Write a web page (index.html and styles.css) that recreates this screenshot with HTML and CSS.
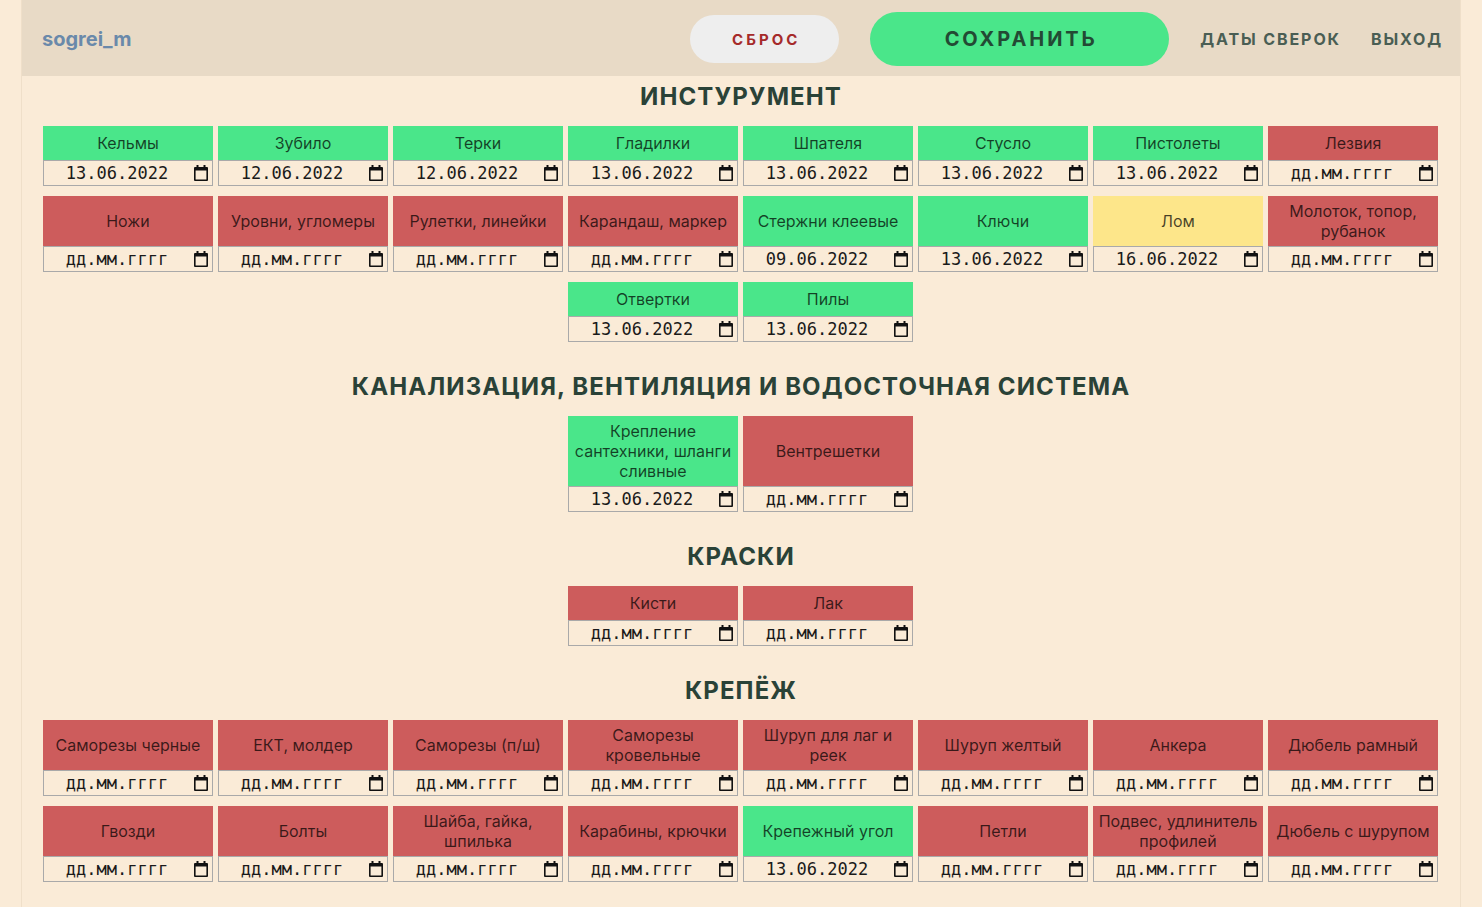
FILE: index.html
```html
<!DOCTYPE html>
<html lang="ru">
<head>
<meta charset="utf-8">
<title>sogrei_m</title>
<link rel="stylesheet" href="styles.css">
</head>
<body>
<svg width="0" height="0" class="defs">
  <defs>
    <symbol id="cal" viewBox="0 0 14 16">
      <path fill-rule="evenodd" d="M2.5 0h2v2h5V0h2v2H13a1 1 0 0 1 1 1v12a1 1 0 0 1-1 1H1a1 1 0 0 1-1-1V3a1 1 0 0 1 1-1h1.5z M1.6 5.5v8.9h10.8V5.5z"/>
    </symbol>
  </defs>
</svg>
<div class="page">
  <header class="topbar">
    <div class="logo">sogrei_m</div>
    <nav class="actions">
      <button class="btn btn-reset">СБРОС</button>
      <button class="btn btn-save">СОХРАНИТЬ</button>
      <a class="link">ДАТЫ СВЕРОК</a>
      <a class="link link-last">ВЫХОД</a>
    </nav>
  </header>

  <section class="group">
    <h2>ИНСТУРУМЕНТ</h2>
    <div class="cards">
      <div class="card ok"><div class="name">Кельмы</div><div class="date"><span>13.06.2022</span><svg><use href="#cal"/></svg></div></div>
      <div class="card ok"><div class="name">Зубило</div><div class="date"><span>12.06.2022</span><svg><use href="#cal"/></svg></div></div>
      <div class="card ok"><div class="name">Терки</div><div class="date"><span>12.06.2022</span><svg><use href="#cal"/></svg></div></div>
      <div class="card ok"><div class="name">Гладилки</div><div class="date"><span>13.06.2022</span><svg><use href="#cal"/></svg></div></div>
      <div class="card ok"><div class="name">Шпателя</div><div class="date"><span>13.06.2022</span><svg><use href="#cal"/></svg></div></div>
      <div class="card ok"><div class="name">Стусло</div><div class="date"><span>13.06.2022</span><svg><use href="#cal"/></svg></div></div>
      <div class="card ok"><div class="name">Пистолеты</div><div class="date"><span>13.06.2022</span><svg><use href="#cal"/></svg></div></div>
      <div class="card bad"><div class="name">Лезвия</div><div class="date"><span>дд.мм.гггг</span><svg><use href="#cal"/></svg></div></div>

      <div class="card bad"><div class="name">Ножи</div><div class="date"><span>дд.мм.гггг</span><svg><use href="#cal"/></svg></div></div>
      <div class="card bad"><div class="name">Уровни, угломеры</div><div class="date"><span>дд.мм.гггг</span><svg><use href="#cal"/></svg></div></div>
      <div class="card bad"><div class="name">Рулетки, линейки</div><div class="date"><span>дд.мм.гггг</span><svg><use href="#cal"/></svg></div></div>
      <div class="card bad"><div class="name">Карандаш, маркер</div><div class="date"><span>дд.мм.гггг</span><svg><use href="#cal"/></svg></div></div>
      <div class="card ok"><div class="name">Стержни клеевые</div><div class="date"><span>09.06.2022</span><svg><use href="#cal"/></svg></div></div>
      <div class="card ok"><div class="name">Ключи</div><div class="date"><span>13.06.2022</span><svg><use href="#cal"/></svg></div></div>
      <div class="card warn"><div class="name">Лом</div><div class="date"><span>16.06.2022</span><svg><use href="#cal"/></svg></div></div>
      <div class="card bad"><div class="name">Молоток, топор, рубанок</div><div class="date"><span>дд.мм.гггг</span><svg><use href="#cal"/></svg></div></div>

      <div class="card ok"><div class="name">Отвертки</div><div class="date"><span>13.06.2022</span><svg><use href="#cal"/></svg></div></div>
      <div class="card ok"><div class="name">Пилы</div><div class="date"><span>13.06.2022</span><svg><use href="#cal"/></svg></div></div>
    </div>
  </section>

  <section class="group">
    <h2>КАНАЛИЗАЦИЯ, ВЕНТИЛЯЦИЯ И ВОДОСТОЧНАЯ СИСТЕМА</h2>
    <div class="cards">
      <div class="card ok"><div class="name">Крепление сантехники, шланги сливные</div><div class="date"><span>13.06.2022</span><svg><use href="#cal"/></svg></div></div>
      <div class="card bad"><div class="name">Вентрешетки</div><div class="date"><span>дд.мм.гггг</span><svg><use href="#cal"/></svg></div></div>
    </div>
  </section>

  <section class="group">
    <h2>КРАСКИ</h2>
    <div class="cards">
      <div class="card bad"><div class="name">Кисти</div><div class="date"><span>дд.мм.гггг</span><svg><use href="#cal"/></svg></div></div>
      <div class="card bad"><div class="name">Лак</div><div class="date"><span>дд.мм.гггг</span><svg><use href="#cal"/></svg></div></div>
    </div>
  </section>

  <section class="group">
    <h2>КРЕПЁЖ</h2>
    <div class="cards">
      <div class="card bad"><div class="name">Саморезы черные</div><div class="date"><span>дд.мм.гггг</span><svg><use href="#cal"/></svg></div></div>
      <div class="card bad"><div class="name">ЕКТ, молдер</div><div class="date"><span>дд.мм.гггг</span><svg><use href="#cal"/></svg></div></div>
      <div class="card bad"><div class="name">Саморезы (п/ш)</div><div class="date"><span>дд.мм.гггг</span><svg><use href="#cal"/></svg></div></div>
      <div class="card bad"><div class="name">Саморезы кровельные</div><div class="date"><span>дд.мм.гггг</span><svg><use href="#cal"/></svg></div></div>
      <div class="card bad"><div class="name">Шуруп для лаг и реек</div><div class="date"><span>дд.мм.гггг</span><svg><use href="#cal"/></svg></div></div>
      <div class="card bad"><div class="name">Шуруп желтый</div><div class="date"><span>дд.мм.гггг</span><svg><use href="#cal"/></svg></div></div>
      <div class="card bad"><div class="name">Анкера</div><div class="date"><span>дд.мм.гггг</span><svg><use href="#cal"/></svg></div></div>
      <div class="card bad"><div class="name">Дюбель рамный</div><div class="date"><span>дд.мм.гггг</span><svg><use href="#cal"/></svg></div></div>

      <div class="card bad"><div class="name">Гвозди</div><div class="date"><span>дд.мм.гггг</span><svg><use href="#cal"/></svg></div></div>
      <div class="card bad"><div class="name">Болты</div><div class="date"><span>дд.мм.гггг</span><svg><use href="#cal"/></svg></div></div>
      <div class="card bad"><div class="name">Шайба, гайка, шпилька</div><div class="date"><span>дд.мм.гггг</span><svg><use href="#cal"/></svg></div></div>
      <div class="card bad"><div class="name">Карабины, крючки</div><div class="date"><span>дд.мм.гггг</span><svg><use href="#cal"/></svg></div></div>
      <div class="card ok"><div class="name">Крепежный угол</div><div class="date"><span>13.06.2022</span><svg><use href="#cal"/></svg></div></div>
      <div class="card bad"><div class="name">Петли</div><div class="date"><span>дд.мм.гггг</span><svg><use href="#cal"/></svg></div></div>
      <div class="card bad"><div class="name">Подвес, удлинитель профилей</div><div class="date"><span>дд.мм.гггг</span><svg><use href="#cal"/></svg></div></div>
      <div class="card bad"><div class="name">Дюбель с шурупом</div><div class="date"><span>дд.мм.гггг</span><svg><use href="#cal"/></svg></div></div>
    </div>
  </section>
</div>
</body>
</html>
```

FILE: styles.css
```css
html, body {
  margin: 0;
  padding: 0;
  background: #faebd7;
  font-family: Inter, "Noto Sans", sans-serif;
}

.defs {
  position: absolute;
  width: 0;
  height: 0;
}

.page {
  max-width: 1440px;
  margin: 0 auto;
  min-height: 907px;
  box-sizing: border-box;
  border-left: 1px solid #efdfc9;
  border-right: 1px solid #efdfc9;
}

.topbar {
  height: 76px;
  background: #e8dac6;
  display: flex;
  align-items: center;
  justify-content: space-between;
  padding: 2px 17px 0 20px;
  box-sizing: border-box;
}

.logo {
  font-size: 20px;
  font-weight: 700;
  color: #6a89aa;
}

.actions {
  display: flex;
  align-items: center;
  gap: 31px;
}

.btn {
  border: none;
  font-family: Inter, "Noto Sans", sans-serif;
  font-weight: 700;
  cursor: pointer;
}

.btn-reset {
  width: 149px;
  height: 48px;
  border-radius: 24px;
  background: #eeeeee;
  color: #a52a2a;
  font-size: 15px;
  letter-spacing: 3px;
  padding: 0 0 0 3px;
}

.btn-save {
  width: 299px;
  height: 54px;
  border-radius: 27px;
  background: #4ae68a;
  color: #234a34;
  font-size: 20px;
  letter-spacing: 2.9px;
  padding: 0 0 0 3px;
}

.link {
  font-size: 16px;
  font-weight: 700;
  letter-spacing: 1.9px;
  color: #4a5e54;
}

.link-last {
  margin-left: -1px;
}

.group {
  padding: 6px 0 24px;
}

.group h2 {
  margin: 0 0 14px;
  height: 30px;
  line-height: 30px;
  text-align: center;
  font-size: 24px;
  font-weight: 700;
  letter-spacing: 1.1px;
  color: #2a4237;
}

.cards {
  display: flex;
  flex-wrap: wrap;
  justify-content: center;
  gap: 10px 5px;
  max-width: 1395px;
  padding-right: 1px;
  margin: 0 auto;
}

.card {
  width: 170px;
  display: flex;
  flex-direction: column;
}

.name {
  flex: 1;
  min-height: 34px;
  box-sizing: border-box;
  padding: 5px 4px;
  display: flex;
  align-items: center;
  justify-content: center;
  text-align: center;
  font-size: 16px;
  line-height: 20px;
  color: rgba(0, 0, 0, 0.72);
}

.ok .name { background: #4ae68a; }
.bad .name { background: #cd5c5c; }
.warn .name { background: #fde68a; }

.date {
  height: 26px;
  box-sizing: border-box;
  border: 1px solid #a9a9a9;
  background: #faebd7;
  display: flex;
  align-items: center;
  padding-right: 4px;
}

.date span {
  flex: 1;
  text-align: center;
  font-family: "DejaVu Sans Mono", "Liberation Mono", monospace;
  font-size: 17px;
  color: #1a1a1a;
  padding-left: 2px;
}

.date svg {
  width: 14px;
  height: 16px;
  fill: #111;
  margin-left: 6px;
}
```
